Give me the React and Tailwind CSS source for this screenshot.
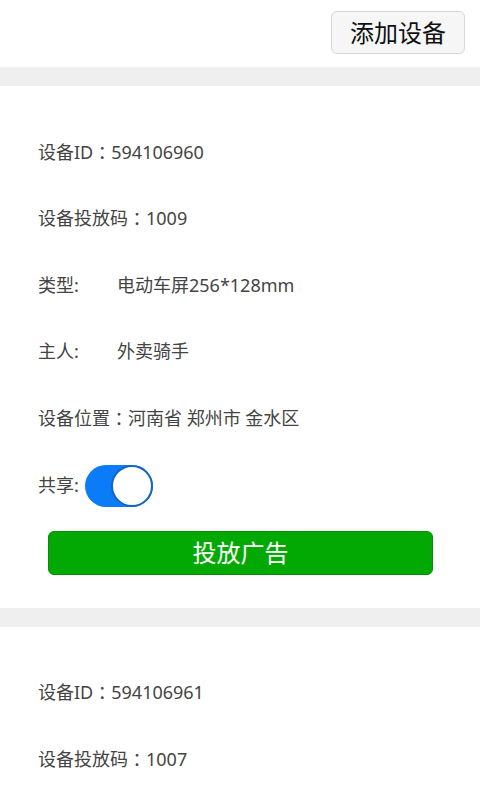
import React from "react";

const font = { fontFamily: '"Noto Sans", "Noto Sans CJK SC", sans-serif' };

function C() {
  return <span style={{ fontFamily: '"Noto Sans CJK TC", sans-serif' }}>：</span>;
}

function Toggle() {
  return (
    <div className="relative w-[68px] h-[42px] rounded-full bg-[#0a7cf7]">
      <div className="absolute right-0 top-0 w-[42px] h-[42px] rounded-full bg-white border-2 border-[#1565c0]"></div>
    </div>
  );
}

function Device({ id, code, showAll }) {
  return (
    <div className="bg-white pt-[33px]">
      <div className="px-[38px] text-[18px] text-[#444]">
        <div className="h-[66.5px] flex items-center">设备ID<C />{id}</div>
        <div className="h-[66.5px] flex items-center">设备投放码<C />{code}</div>
        {showAll && (
          <>
            <div className="h-[66.5px] flex items-center">
              <span className="w-[79px]">类型:</span>
              <span>电动车屏256*128mm</span>
            </div>
            <div className="h-[66.5px] flex items-center">
              <span className="w-[79px]">主人:</span>
              <span>外卖骑手</span>
            </div>
            <div className="h-[66.5px] flex items-center">设备位置<C />河南省 郑州市 金水区</div>
            <div className="mt-[13px] flex items-center gap-[6px]">
              <span>共享:</span>
              <Toggle />
            </div>
          </>
        )}
      </div>
      {showAll && (
        <div className="pl-[48px] pr-[47px] pt-[24px] pb-[33px]">
          <div className="h-[44px] rounded-[6px] bg-[#02a902] border border-[#029002] flex items-center justify-center text-white text-[24px]">
            投放广告
          </div>
        </div>
      )}
    </div>
  );
}

export default function App() {
  return (
    <div className="w-[480px] h-[800px] overflow-hidden bg-white" style={font}>
      <div className="h-[67px] flex items-start justify-end pt-[11px] pr-[15px]">
        <div className="w-[134px] h-[43px] rounded-[6px] border border-[#d6d6d6] bg-[#f6f6f6] flex items-center justify-center text-[24px] text-[#111]">
          添加设备
        </div>
      </div>
      <div className="h-[19px] bg-[#efefef]"></div>
      <Device id="594106960" code="1009" showAll />
      <div className="h-[19px] bg-[#efefef]"></div>
      <Device id="594106961" code="1007" />
    </div>
  );
}
